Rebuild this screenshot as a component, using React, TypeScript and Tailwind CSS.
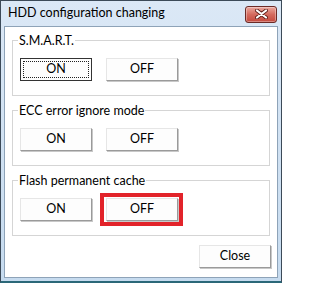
import React from "react";

const BTN =
  "flex h-[23px] w-[72px] items-center justify-center border border-t-[#e6e6e6] border-l-[#e6e6e6] border-r-[#9a9a9a] border-b-[#9a9a9a] bg-[#fdfdfd] text-[12.5px] text-black shadow-[1px_1px_0_#c8c8c8]";

function Group({ label, children }: { label: string; children: React.ReactNode }) {
  return (
    <div className="relative h-[56px] border border-[#d5d5d5] shadow-[inset_1px_1px_0_#fff]">
      <span className="absolute -top-[8px] left-[5px] bg-white px-[1px] text-[12.5px] leading-[15px] text-black">
        {label}
      </span>
      <div className="flex gap-[14px] pl-[7px] pt-[17px]">{children}</div>
    </div>
  );
}

function CloseX() {
  return (
    <div className="flex h-[17px] w-[32px] items-center justify-center rounded-[3px] border border-[#6b2a26] bg-gradient-to-b from-[#eaa89e] via-[#d46a5e] to-[#c4483d] shadow-[inset_0_0_0_1px_rgba(255,255,255,0.35)]">
      <svg width="13" height="10" viewBox="0 0 13 10">
        <path d="M2 1.5 L11 8.5 M11 1.5 L2 8.5" stroke="#5a1b17" strokeWidth="3.8" strokeLinecap="round" />
        <path d="M2 1.5 L11 8.5 M11 1.5 L2 8.5" stroke="#fff" strokeWidth="2.2" strokeLinecap="round" />
      </svg>
    </div>
  );
}

export default function App() {
  return (
    <div
      className="flex h-[283px] w-[282px] flex-col border border-[#3c4a58] border-b-2 border-b-[#2b6878] bg-gradient-to-b from-[#dbe8f6] to-[#c6dbef]"
      style={{ fontFamily: 'Lato, "Noto Sans", sans-serif' }}
    >
      <div className="flex h-[25px] shrink-0 items-center justify-between pl-[7px] pr-[4px]">
        <span className="text-[12.5px] text-black">HDD configuration changing</span>
        <div className="mt-[1px]">
          <CloseX />
        </div>
      </div>
      <div className="mx-[3px] mb-[3px] flex flex-1 flex-col border border-[#8ea3b8] bg-white px-[7px] pt-[13px]">
        <Group label="S.M.A.R.T.">
          <button className="flex h-[23px] w-[72px] items-center justify-center border border-[#333] bg-[#fdfdfd] p-[2px] text-[12.5px] text-black">
            <span className="flex h-full w-full items-center justify-center border border-dotted border-[#222]">ON</span>
          </button>
          <button className={BTN}>OFF</button>
        </Group>
        <div className="h-[14px]" />
        <Group label="ECC error ignore mode">
          <button className={BTN}>ON</button>
          <button className={BTN}>OFF</button>
        </Group>
        <div className="h-[14px]" />
        <Group label="Flash permanent cache">
          <button className={BTN}>ON</button>
          <div className="relative">
            <button className={BTN}>OFF</button>
            <div className="absolute -bottom-[5px] -left-[6px] -right-[5px] -top-[5px] border-4 border-[#e2232a]" />
          </div>
        </Group>
        <div className="flex justify-end pt-[9px]">
          <button className={BTN + " -mr-[1px]"}>Close</button>
        </div>
      </div>
    </div>
  );
}
